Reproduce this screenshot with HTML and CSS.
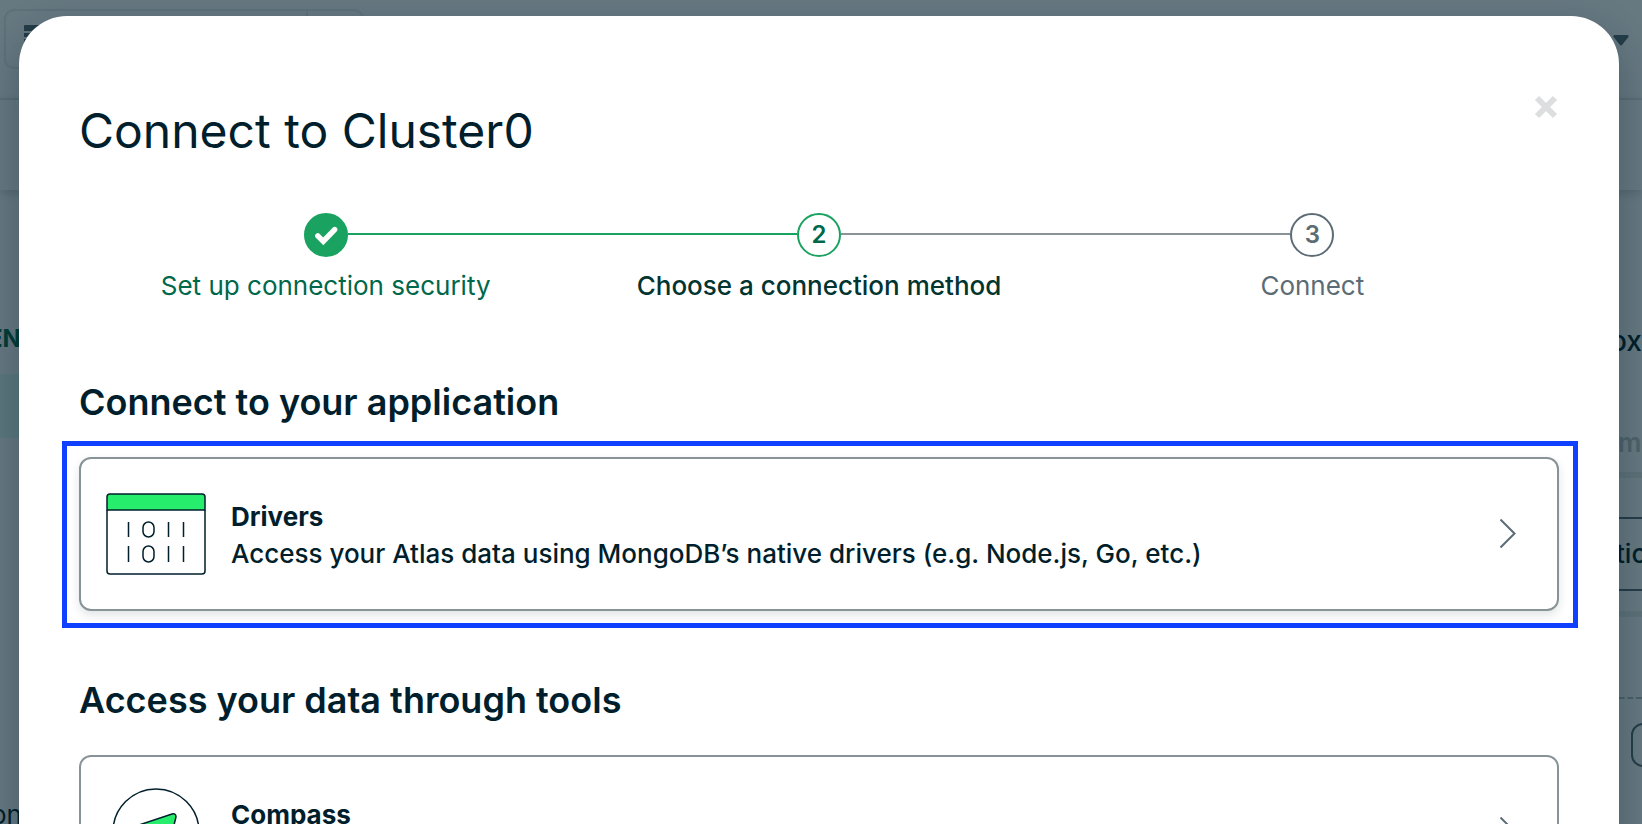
FILE: index.html
```html
<!DOCTYPE html>
<html lang="en">
<head>
<meta charset="utf-8">
<meta name="viewport" content="width=device-width, initial-scale=1">
<title>Connect to Cluster0</title>
<link rel="stylesheet" href="styles.css">
</head>
<body>
<div class="app" aria-hidden="true">
  <header class="topbar">
    <div class="project-picker">
      <span class="project-main">
        <svg class="project-icon" width="28" height="28" viewBox="0 0 28 28"><path d="M0 1a1 1 0 0 1 1-1h26v6H0zM0 8h28v4H0zM0 14h28v4H0z" fill="#5c6c75"/></svg>
      </span>
      <span class="project-more"></span>
    </div>
    <svg class="caret" width="16" height="11" viewBox="0 0 16 11"><path d="M1 0h14q1 1 .4 2L9 10q-1 1-2 0L.6 2Q0 1 1 0z" fill="#5c6c75"/></svg>
  </header>
  <div class="tabs"></div>
  <div class="columns">
    <nav class="sidebar">
      <div class="sidebar-title">EN</div>
      <div class="sidebar-active"></div>
      <div class="sidebar-item">on</div>
    </nav>
    <aside class="panel">
      <div class="panel-title">ox</div>
      <div class="panel-tab">m</div>
      <div class="panel-field">tic</div>
      <div class="panel-dashes"></div>
      <div class="panel-button"></div>
    </aside>
  </div>
</div>

<div class="backdrop">
  <main class="modal" role="dialog" aria-modal="true" aria-labelledby="modal-title">
    <button class="close" type="button" aria-label="Close">
      <svg width="24" height="24" viewBox="0 0 24 24"><path d="M3 3l18 18M21 3L3 21" stroke="#dcdedf" stroke-width="6" fill="none"/></svg>
    </button>
    <h1 class="title" id="modal-title">Connect to Cluster0</h1>

    <ol class="stepper">
      <li class="step step-done">
        <span class="step-mark">
          <svg width="44" height="44" viewBox="0 0 44 44"><path d="M13 23l6 6 12.500-13" fill="none" stroke="#fff" stroke-width="6" stroke-linecap="round"/></svg>
        </span>
        <span class="step-label">Set up connection security</span>
      </li>
      <li class="step step-current" aria-current="step">
        <span class="step-mark">2</span>
        <span class="step-label">Choose a connection method</span>
      </li>
      <li class="step">
        <span class="step-mark">3</span>
        <span class="step-label">Connect</span>
      </li>
    </ol>

    <section class="group">
      <h2 class="group-title">Connect to your application</h2>
      <button class="card card-highlighted" type="button">
        <svg class="card-icon" width="100" height="84" viewBox="0 0 100 84" fill="none" stroke="#001e2b" stroke-width="1.500">
          <path d="M1 18V5q0-3 3-3h92q3 0 3 3v13z" fill="#26ee6c"/>
          <path d="M1 18v61q0 3 3 3h92q3 0 3-3V18"/>
          <path d="M22.500 30v15M62.500 30v15M77.500 30v15M22.500 54v16M62.500 54v16M77.500 54v16"/>
          <rect x="37" y="30" width="11" height="15" rx="5.500"/>
          <rect x="37" y="54" width="11" height="16" rx="5.500"/>
        </svg>
        <span class="card-text">
          <strong class="card-name">Drivers</strong>
          <span class="card-note">Access your Atlas data using MongoDB’s native drivers (e.g. Node.js, Go, etc.)</span>
        </span>
        <svg class="card-arrow" width="16" height="30" viewBox="0 0 16 30"><path d="M.5 .5l14 14-14 14" fill="none" stroke="#5c6c75" stroke-width="2"/></svg>
      </button>
    </section>

    <section class="group">
      <h2 class="group-title">Access your data through tools</h2>
      <button class="card" type="button">
        <svg class="card-icon" width="100" height="88" viewBox="0 0 100 88" fill="none" stroke="#001e2b" stroke-width="1.500">
          <circle cx="50" cy="44" r="43"/>
          <path d="M30 38l36-12q4-1 4 3l-5 20-28 12z" fill="#26ee6c"/>
        </svg>
        <span class="card-text">
          <strong class="card-name">Compass</strong>
          <span class="card-note">Explore, modify, and visualize your data with MongoDB’s GUI</span>
        </span>
        <svg class="card-arrow" width="16" height="30" viewBox="0 0 16 30"><path d="M.5 .5l14 14-14 14" fill="none" stroke="#5c6c75" stroke-width="2"/></svg>
      </button>
    </section>
  </main>
</div>
</body>
</html>
```
FILE: styles.css
```css
* {
  box-sizing: border-box;
}

body {
  margin: 0;
  height: 100vh;
  overflow: hidden;
  position: relative;
  background: #fff;
  color: #001e2b;
  font-family: Inter, "Liberation Sans", sans-serif;
  font-size: 26px;
  line-height: 36px;
}

h1, h2, ol {
  margin: 0;
  padding: 0;
}

button {
  font: inherit;
  color: inherit;
}

/* Page behind the dialog */

.app {
  height: 100vh;
  overflow: hidden;
}

.topbar {
  display: flex;
  align-items: flex-start;
  justify-content: space-between;
  height: 100px;
  padding: 9px 13px 0 4px;
  border-bottom: 2px solid #e8edeb;
}

.project-picker {
  display: flex;
  width: 360px;
  height: 60px;
  border: 2px solid #e8edeb;
  border-radius: 10px;
}

.project-main {
  flex: 1;
  padding: 14px 18px;
}

.project-more {
  width: 56px;
  border-left: 2px solid #e8edeb;
}

.caret {
  margin-top: 26px;
}

.tabs {
  height: 90px;
  box-shadow: 0 3px 10px rgba(0, 30, 43, 0.2);
}

.columns {
  display: flex;
  justify-content: space-between;
}

.sidebar {
  width: 60px;
  padding-top: 131px;
}

.sidebar-title {
  margin-left: -12px;
  color: #00684a;
  font-size: 24px;
  font-weight: 700;
}

.sidebar-active {
  height: 64px;
  margin-top: 17px;
  background: #e3fcf7;
}

.sidebar-item {
  margin: 359px 0 0 -9px;
}

.panel {
  display: flex;
  flex-direction: column;
  width: 32px;
  padding-top: 133px;
}

.panel-title {
  font-size: 28px;
  font-weight: 500;
}

.panel-tab {
  margin-top: 66px;
  padding: 0 0 11px 8px;
  border-bottom: 6px solid #e8edeb;
  color: #c1c7c6;
  font-weight: 600;
}

.panel-field {
  margin-top: 39px;
  padding: 17px 0 17px 6px;
  border: solid #5c6c75;
  border-width: 2px 0;
  font-weight: 500;
}

.panel-dashes {
  height: 88px;
  margin-top: 20px;
  border-top: 6px solid #e8edeb;
  border-bottom: 2px dashed #b8c4c2;
}

.panel-button {
  width: 80px;
  height: 44px;
  margin: 24px 0 0 21px;
  border: 2px solid #5c6c75;
  border-radius: 12px;
}

/* Dialog */

.backdrop {
  position: absolute;
  inset: 0;
  padding: 16px 23px 0 19px;
  overflow: hidden;
  background: rgba(0, 30, 43, 0.6);
}

.modal {
  position: relative;
  min-height: 100%;
  padding: 83px 60px 60px;
  border-radius: 48px;
  background: #fff;
  box-shadow: 0 16px 40px rgba(0, 30, 43, 0.3);
}

.close {
  position: absolute;
  top: 79px;
  right: 61px;
  display: flex;
  padding: 0;
  border: 0;
  background: none;
}

.title {
  font-size: 48px;
  font-weight: 400;
  line-height: 64px;
}

.stepper {
  display: grid;
  grid-template-columns: repeat(3, 1fr);
  margin-top: 50px;
  list-style: none;
}

.step {
  display: flex;
  position: relative;
  flex-direction: column;
  align-items: center;
  gap: 13px;
  color: #5c6c75;
}

.step + .step::before {
  content: "";
  position: absolute;
  top: 20px;
  right: calc(50% + 22px);
  width: calc(100% - 44px);
  height: 2px;
  background: #889397;
}

.step + .step-current::before {
  background: #1aa260;
}

.step-mark {
  display: flex;
  align-items: center;
  justify-content: center;
  width: 44px;
  height: 44px;
  border: 2px solid #5c6c75;
  border-radius: 50%;
  font-size: 24px;
  font-weight: 600;
}

.step-label {
  line-height: 32px;
}

.step-done {
  color: #00684a;
}

.step-done .step-mark {
  border-color: #1aa260;
  background: #1aa260;
}

.step-current {
  color: #023430;
}

.step-current .step-mark {
  border-color: #1aa260;
  color: #00684a;
}

.step-current .step-label {
  font-weight: 500;
}

.group {
  margin-top: 67px;
}

.stepper + .group {
  margin-top: 78px;
}

.group-title {
  font-size: 36px;
  font-weight: 600;
  line-height: 44px;
}

.card {
  display: flex;
  position: relative;
  align-items: center;
  gap: 25px;
  width: 100%;
  height: 154px;
  margin-top: 33px;
  padding: 0 41px 0 25px;
  border: 2px solid #889397;
  border-radius: 12px;
  background: #fff;
  text-align: left;
}

.card-highlighted {
  box-shadow: 0 4px 10px rgba(0, 30, 43, 0.12);
}

.card-highlighted::after {
  content: "";
  position: absolute;
  inset: -18px -21px -19px -19px;
  border: 5px solid #0f3fff;
}

.card-icon,
.card-arrow {
  flex: none;
}

.card-text {
  display: flex;
  flex: 1;
  flex-direction: column;
  padding-top: 2px;
  line-height: 37px;
}

.card-name {
  font-weight: 700;
}

.card-note {
  font-weight: 500;
}
```
